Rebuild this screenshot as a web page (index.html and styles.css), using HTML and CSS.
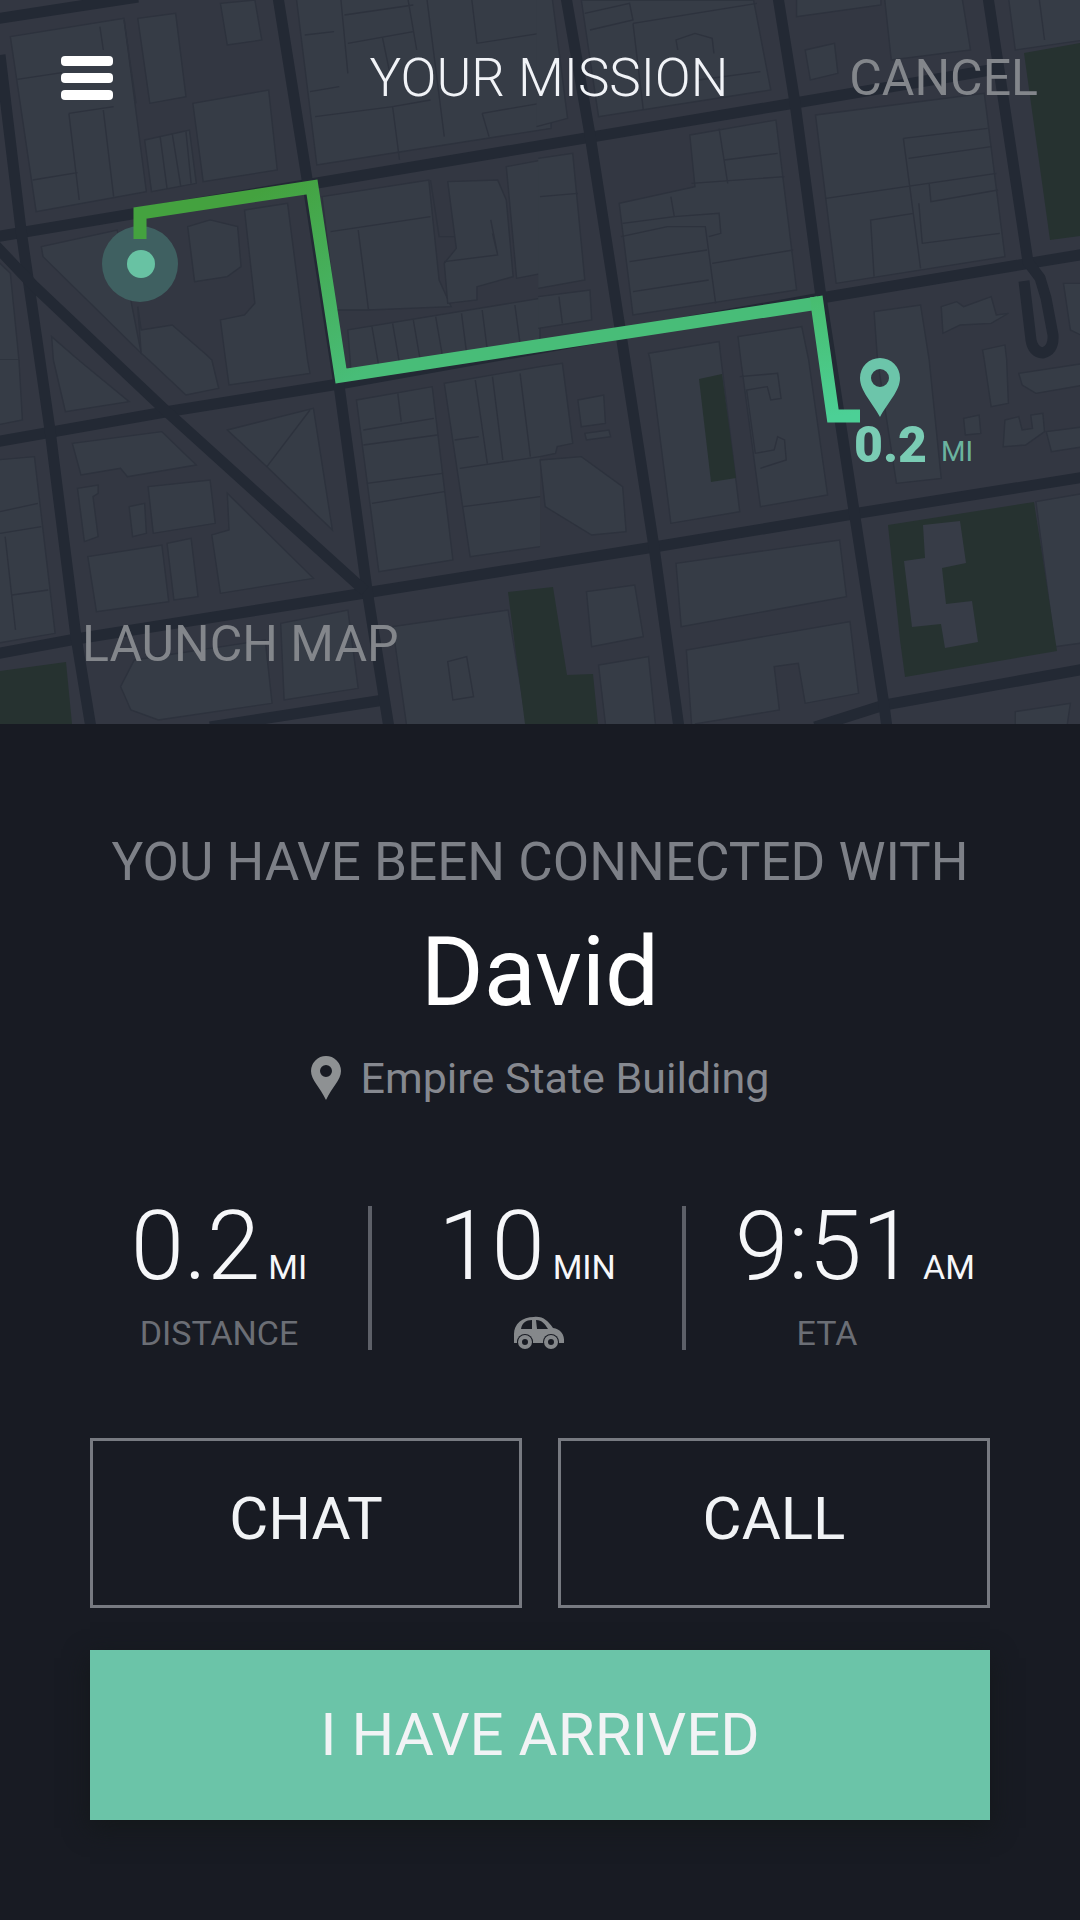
FILE: index.html
```html
<!DOCTYPE html>
<html lang="en">
<head>
<meta charset="utf-8">
<meta name="viewport" content="width=device-width, initial-scale=1">
<title>Your Mission</title>
<link rel="stylesheet" href="styles.css">
</head>
<body>
<main class="screen">
  <section class="map" id="map" aria-label="Route map">
    <svg class="map-art" viewBox="0 0 1080 724" preserveAspectRatio="xMidYMid slice">
      <defs>
        <linearGradient id="route" gradientUnits="userSpaceOnUse" x1="280" y1="180" x2="420" y2="420">
          <stop offset="0" stop-color="#44a23f"/>
          <stop offset="0.75" stop-color="#48bd78"/>
          <stop offset="1" stop-color="#48bd78"/>
        </linearGradient>
        <linearGradient id="route-end" gradientUnits="userSpaceOnUse" x1="817" y1="300" x2="832" y2="417">
          <stop offset="0" stop-color="#48bd70"/>
          <stop offset="1" stop-color="#4cd096"/>
        </linearGradient>
      </defs>

      <!-- north-west blocks -->
      <g class="block" transform="scale(.3444 .3333)">
        <path d="M30 110 360 55 425 575 105 635Z"/>
        <path class="lines" d="M50 238 180 218M290 80 300 150M200 340 230 600M200 340 330 320M300 330 330 590M95 540 225 518M360 60 395 310"/>
        <path d="M400 55 510 40 540 290 435 310Z"/>
        <path d="M640 10 740 0 760 120 660 135Z"/>
        <path d="M420 420 550 390 570 550 440 575Z"/>
        <path class="lines" d="M465 410 485 565M500 400 525 560M540 395 555 550"/>
        <path d="M560 310 780 270 805 510 590 545Z"/>
        <path d="M860 -10 1600 -10 1600 385 920 495Z"/>
        <path class="lines" d="M885 105 970 95M900 275 985 260M915 350 1140 320 1160 480M990 0 1010 220M1000 45 1200 15M1010 130 1200 95M1110 110 1130 210M1185 0 1210 150M1240 0 1290 410M1370 0 1385 130 1568 100M1140 320 1250 300M1400 340 1568 310M1400 340 1420 410"/>
        <path d="M120 740 340 690 410 1060 125 770Z"/>
        <path d="M545 680 610 660 690 680 700 800 660 830 565 845Z"/>
        <path d="M655 1080 640 960 710 945 740 910 710 630 835 610 893 1080"/>
        <path d="M432 1080 410 1060 400 920 410 990 500 975 600 1065 615 1080"/>
        <path d="M935 590 1245 540 1275 840 1310 920 1070 930 975 930Z"/>
        <path class="lines" d="M960 695 1250 650M1040 690 1070 930M1250 540 1275 710 1320 710"/>
        <path d="M1300 545 1445 540 1470 600 1490 830 1385 860 1385 900 1300 910 1290 790 1325 745Z"/>
        <path class="lines" d="M1290 785 1445 765 1425 660M1445 765 1430 700"/>
        <path d="M1470 500 1600 475 1600 815 1500 835 1480 610Z"/>
        <path d="M1010 990 1568 895 1568 1030 1020 1125Z"/>
        <path class="lines" d="M1080 980 1100 1100M1140 970 1160 1090M1200 960 1220 1080M1265 950 1285 1070M1340 940 1355 1060M1400 930 1415 1050M1495 915 1510 1030"/>
        <path d="M155 1080 150 1010 228 1080"/>
        <path d="M-10 780 30 820 55 1080-10 1080"/>
      </g>

      <!-- north-east blocks -->
      <g class="block" transform="translate(540 0) scale(.3444 .3333)">
        <path d="M-10-10 35-10 80 355-10 380"/>
        <path d="M120 0 620 0 670 270 170 350Z"/>
        <path class="lines" d="M130 40 260 10 270 60 145 90M270 70 630 10M270 70 300 330M400 150 395 120 450 100 500 115 505 160M460 240 640 215"/>
        <path d="M745 50 745-10 990-10 990 15Z"/>
        <path d="M1000-10 1225-10 1250 150 1020 180Z"/>
        <path d="M770 150 855 130 865 220 785 240Z"/>
        <path d="M1360-10 1580-10 1580 120 1380 150Z"/>
        <path class="lines" d="M1450 0 1465 120"/>
        <path d="M435 405 685 360 745 870 270 945 230 610 450 560Z"/>
        <path class="lines" d="M520 385 545 550M535 480 690 460M440 550 710 530M380 590 390 650 520 640 525 700 490 710M240 670 390 650M235 710 370 680 480 680 510 910M260 785 485 750M500 790 735 750M270 875 490 840"/>
        <path d="M800 345 1290 280 1350 770 860 850Z"/>
        <path class="lines" d="M1055 415 1300 385M1055 415 1105 805M1070 475 1310 440M830 595 1325 520M1130 550 1135 605 1330 570M1100 610 1110 730 1335 700M970 830 960 660 1085 640"/>
        <path d="M-5 475 95 460 130 840-5 865"/>
        <path class="lines" d="M0 590 110 580"/>
        <path d="M-5 890 145 870 150 960-5 985"/>
        <path class="lines" d="M55 890 65 970"/>
        <path d="M320 1080 315 1060 520 1025 526 1080"/>
        <path d="M583 1080 575 1010 760 980 780 1080"/>
        <path d="M980 1080 970 935 1105 915 1130 1080"/>
        <path d="M1165 920 1210 905 1230 920 1310 890 1325 945 1360 940 1310 970 1220 975 1170 1000Z"/>
        <path d="M1580 850 1520 850 1540 990 1580 1010"/>
        <path d="M1290 1080 1285 1050 1350 1035 1355 1080"/>
      </g>

      <!-- south-west blocks -->
      <g class="block" transform="translate(0 360) scale(.3444 .3333)">
        <path d="M55 0 65 180-10 195-10 0"/>
        <path d="M228 0 375 125 190 155 155 0"/>
        <path d="M615 0 635 85 540 105 432 0"/>
        <path d="M893 0 900 40 665 75 655 0"/>
        <path d="M210 250 470 215 570 315 370 350 350 325 235 345Z"/>
        <path d="M225 385 285 375 285 400 270 410 285 530 245 545Z"/>
        <path d="M375 440 420 430 425 520 385 530Z"/>
        <path d="M430 380 610 360 625 490 445 520Z"/>
        <path d="M660 400 910 655 640 700 615 525 665 510Z"/>
        <path d="M255 590 470 555 490 725 280 755Z"/>
        <path d="M485 550 555 535 575 710 505 720Z"/>
        <path d="M660 210 910 145 965 510 775 320Z"/>
        <path class="lines" d="M775 320 900 150"/>
        <path d="M-10 300 100 290 160 820-10 850Z"/>
        <path class="lines" d="M0 455 110 430M0 520 120 500M15 530 45 810M35 705 140 690"/>
        <path d="M1035 120 1255 80 1315 600 1100 635Z"/>
        <path class="lines" d="M1155 100 1165 185M1055 210 1260 175M1055 255 1270 225M1065 370 1285 340M1080 430 1290 395"/>
        <path d="M1568 560 1365 590 1290 70 1568 20"/>
        <path class="lines" d="M1380 60 1415 310M1430 50 1460 300M1510 40 1540 290M1320 240 1390 230M1335 325 1568 290M1345 440 1568 410"/>
        <path d="M390 900 770 840 790 1030 460 1080 380 1050 350 980Z"/>
        <path d="M815 790 1010 750 1040 985 825 1020Z"/>
        <path d="M1180 1092 1140 800 1475 750 1530 1092"/>
        <path d="M1300 905 1355 890 1375 1010 1315 1020Z"/>
      </g>

      <!-- south-east blocks -->
      <g class="block" transform="translate(540 360) scale(.3444 .3333)">
        <path d="M0 20 65 10 95 250 50 260 45 280 0 290"/>
        <path d="M110 120 185 105 190 190 120 200ZM130 220 200 210 205 230 135 240Z"/>
        <path d="M0 300 120 290 240 380 250 515 150 525 15 440Z"/>
        <path d="M320 0 380 490 580 455 526 0"/>
        <path d="M583 0 640 440 835 405 780 0"/>
        <path class="lines" d="M580 50 690 40 700 115 670 120 660 80 600 90 625 280 680 270 690 230 710 240 715 300 640 325"/>
        <path d="M1130 0 1165 355 1035 370 980 0"/>
        <path d="M1290 0 1310 140 1360 130 1355 0"/>
        <path d="M1390 40 1580 10 1580 75 1440 100 1400 75Z"/>
        <path d="M1230 175 1275 165 1280 220 1235 225ZM1350 180 1390 170 1400 210 1430 205 1425 165 1460 160 1465 215 1410 255 1345 260ZM1470 215 1580 200 1580 260 1485 275Z"/>
        <path d="M395 610 870 540 890 710 410 800Z"/>
        <path d="M440 1092 425 870 900 785 925 1000 770 1030 750 910 680 920 695 1050 450 1092"/>
        <path d="M135 695 275 675 300 830 150 860Z"/>
        <path d="M190 1092 170 915 315 890 335 1092"/>
        <path d="M1440 425 1580 400 1580 848 1495 860Z"/>
        <path d="M1380 1100 1380 1055 1540 1030 1530 1100"/>
      </g>

      <!-- parks -->
      <g class="park">
        <path d="M1024 53 1080 43V236L1050 240Z"/>
        <path d="M699 379 722 374 736 478 711 482Z"/>
        <path d="M0 671 66 662 72 724H0Z"/>
        <path d="M508 592 553 587 567 675 593 674 598 724H525Z"/>
        <path d="M888 525 1034 502 1057 651 905 677 900 640Z"/>
      </g>
      <path class="cutout" d="M923 525 960 521 966 563 942 568 946 604 972 601 978 642 945 648 941 624 912 627 904 561 925 558Z"/>

      <!-- streets -->
      <g class="street">
        <path d="M-5 19 138-3"/>
        <path d="M-5 237 311 184 795 103 1002 68"/>
        <path d="M-5 442 165 412 339 384 821 298 1085 254"/>
        <path d="M-5 654 76 639 365 593 654 547 853 514 1085 477"/>
        <path d="M210 727 384 700M815 727 884 705 1085 669"/>
        <path d="M0 55 21 230 50 430 76 637 91 728"/>
        <path d="M278-3 308 185 339 385 367 590 389 728"/>
        <path d="M566-3 590 135 654 547 679 728"/>
        <path d="M778-3 795 103 821 297 884 705 887 728"/>
        <path d="M988-3 1028 262 1040 278 1046 298 1053 335Q1054 350 1043 353 1033 352 1031 340L1024 281"/>
        <path d="M-5 245 34 286 165 410 365 591"/>
      </g>

      <!-- route -->
      <circle cx="140" cy="264" r="38" fill="#3f6061"/>
      <path class="route" stroke="url(#route)" d="M140 239V213L312 187 341 376 818 303"/>
      <path class="route" stroke="url(#route-end)" d="M811 304 817 303 833 416H860"/>
      <circle cx="141" cy="264" r="14" fill="#68c2a3"/>
      <path fill="#6cc5aa" fill-rule="evenodd" d="M880 417C872 402 860 391 860 378A20 20 0 0 1 900 378C900 391 888 402 880 417ZM880 369A9 9 0 1 0 880 387 9 9 0 1 0 880 369Z"/>
      <text class="map-distance" x="854" y="462">0.2</text>
      <text class="map-unit" x="941" y="461">MI</text>
    </svg>

    <div class="map-overlay">
      <header class="topbar">
        <button class="menu" type="button" aria-label="Menu">
          <svg viewBox="0 0 54 48" width="54" height="48">
            <g fill="#fff">
              <rect x="1" y="2" width="52" height="10" rx="4"/>
              <rect x="1" y="19" width="52" height="10" rx="4"/>
              <rect x="1" y="36" width="52" height="10" rx="4"/>
            </g>
          </svg>
        </button>
        <h1 class="title">YOUR MISSION</h1>
        <button class="text-button cancel" type="button">CANCEL</button>
      </header>
      <a class="text-button launch" href="#map">LAUNCH MAP</a>
    </div>
  </section>

  <section class="details">
    <p class="intro">YOU HAVE BEEN CONNECTED WITH</p>
    <h2 class="name">David</h2>
    <p class="place">
      <svg viewBox="0 0 30 44" width="30" height="44" aria-hidden="true">
        <path fill="#8e9193" fill-rule="evenodd" d="M15 44C9 31 0 24 0 15A15 15 0 0 1 30 15C30 24 21 31 15 44ZM15 9A6 6 0 1 0 15 21 6 6 0 1 0 15 9Z"/>
      </svg>
      Empire State Building
    </p>

    <div class="stats">
      <div class="stat">
        <p class="value">0.2<span class="unit">MI</span></p>
        <p class="label">DISTANCE</p>
      </div>
      <div class="stat stat-time">
        <p class="value">10<span class="unit">MIN</span></p>
        <p class="label">
          <svg viewBox="0 0 52 34" width="52" height="34" role="img" aria-label="By car">
            <path fill="#85888b" d="M1 27V18C1 8 9 1 21 1 30 0 35 5 40 12 47 13 52 18 51 27H46A8 8 0 0 0 31 27H20A8 8 0 0 0 4 27Z"/>
            <path fill="#181b23" d="M19 4V13H8C9 7 13 4 19 4ZM23 4C29 4 32 8 35 13H24Z"/>
            <circle cx="12" cy="26" r="8" fill="#181b23"/>
            <circle cx="38" cy="26" r="8" fill="#181b23"/>
            <circle cx="12" cy="26" r="5" fill="#181b23" stroke="#85888b" stroke-width="4"/>
            <circle cx="38" cy="26" r="5" fill="#181b23" stroke="#85888b" stroke-width="4"/>
          </svg>
        </p>
      </div>
      <div class="stat stat-eta">
        <p class="value">9:51<span class="unit">AM</span></p>
        <p class="label">ETA</p>
      </div>
    </div>

    <div class="actions">
      <button class="action" type="button">CHAT</button>
      <button class="action" type="button">CALL</button>
      <button class="action primary" type="button">I HAVE ARRIVED</button>
    </div>
  </section>
</main>
</body>
</html>
```
FILE: styles.css
```css
* {
  box-sizing: border-box;
}

body {
  margin: 0;
  background: #181b23;
  color: #fff;
  font-family: Roboto, "Liberation Sans", sans-serif;
}

h1,
h2,
p {
  margin: 0;
  font-weight: 400;
}

button {
  padding: 0;
  border: 0;
  background: none;
  color: inherit;
  font: inherit;
  cursor: pointer;
}

svg {
  display: block;
}

.screen {
  min-height: 100vh;
  background: #181b23;
}

/* Map */
.map {
  display: grid;
  background: #333742;
}

.map-art,
.map-overlay {
  grid-area: 1 / 1;
  width: 100%;
}

.block path {
  fill: #363c46;
  stroke: #2d323d;
  stroke-width: 4;
}

.block .lines {
  fill: none;
}

.park {
  fill: #263230;
}

.cutout {
  fill: #373c47;
}

.street {
  fill: none;
  stroke: #232934;
  stroke-width: 11;
}

.route {
  fill: none;
  stroke-width: 13;
}

.map-distance {
  fill: #7accb4;
  font-size: 50px;
  font-weight: 900;
}

.map-unit {
  fill: #6bb39f;
  font-size: 28px;
}

.map-overlay {
  display: flex;
  flex-direction: column;
  justify-content: space-between;
  align-items: flex-start;
  padding: 44px 42px 48px 60px;
}

.topbar {
  display: grid;
  grid-template-columns: 1fr auto 1fr;
  align-items: center;
  width: 100%;
}

.menu {
  justify-self: start;
}

.title {
  color: #f1f3f7;
  font-size: 53px;
  font-weight: 300;
  line-height: 68px;
}

.text-button {
  color: #83868b;
  font-size: 50px;
  line-height: 64px;
  text-decoration: none;
}

.cancel {
  justify-self: end;
}

.launch {
  margin-left: 22px;
}

/* Details */
.details {
  padding: 100px 90px;
  text-align: center;
}

.intro {
  color: #7d8087;
  font-size: 53px;
  line-height: 76px;
}

.name {
  font-size: 96px;
  line-height: 144px;
}

.place {
  display: flex;
  justify-content: center;
  align-items: center;
  gap: 20px;
  color: #868990;
  font-size: 43px;
  line-height: 68px;
}

.stats {
  display: grid;
  grid-template-columns: 298px 314px 1fr;
  margin: 94px -34px 0 -20px;
}

.stat {
  height: 144px;
}

.stat + .stat {
  border-left: 4px solid #5d6068;
}

.value {
  display: flex;
  justify-content: center;
  align-items: baseline;
  gap: 8px;
  color: #f6f7f9;
  font-size: 96px;
  font-weight: 300;
  line-height: 80px;
}

.unit {
  font-size: 34px;
  font-weight: 400;
  line-height: 40px;
}

.label {
  display: flex;
  justify-content: center;
  align-items: center;
  height: 44px;
  margin-top: 24px;
  color: #6b6e75;
  font-size: 34px;
  line-height: 44px;
}

.stat-time .label {
  padding-left: 24px;
}

.stat-eta .label {
  padding-right: 56px;
}

.actions {
  display: grid;
  grid-template-columns: 1fr 1fr;
  gap: 42px 36px;
  margin-top: 88px;
}

.action {
  height: 170px;
  padding-bottom: 8px;
  border: 3px solid #777a81;
  color: #f1f3f5;
  font-size: 60px;
  line-height: 68px;
}

.primary {
  grid-column: 1 / -1;
  padding-bottom: 0;
  border: 0;
  background: #6bc4a8;
  box-shadow: 0 8px 24px #14181a;
}
```
